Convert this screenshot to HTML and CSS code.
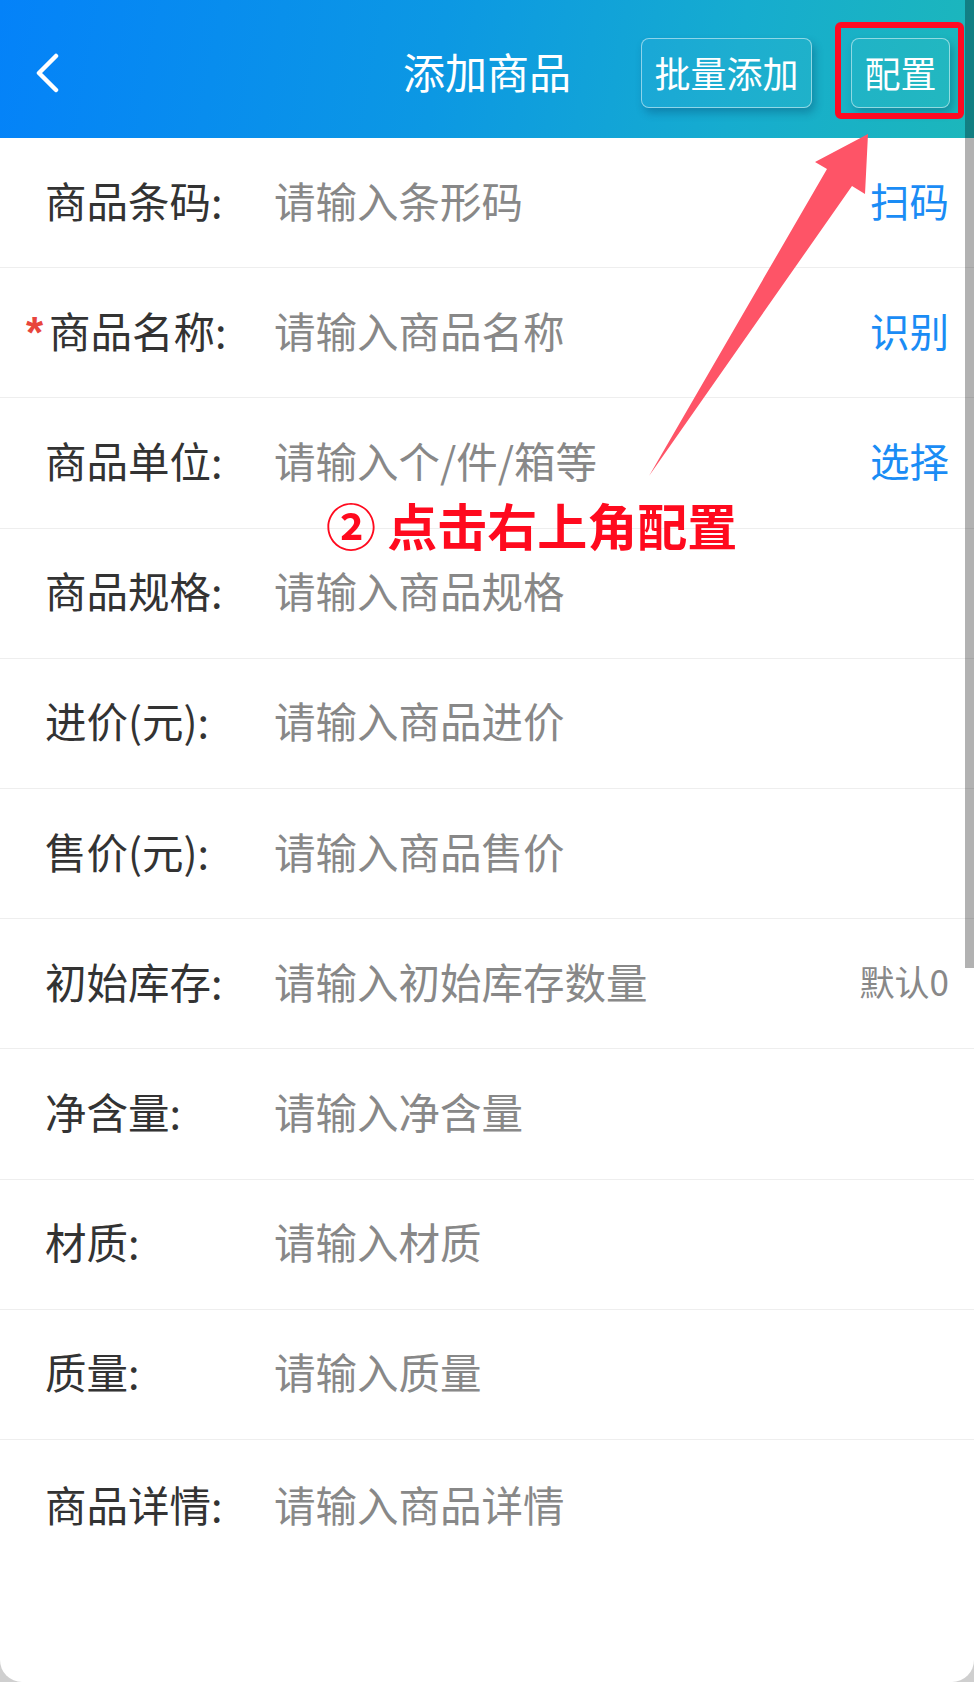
FILE: index.html
```html
<!DOCTYPE html>
<html lang="zh-CN">
<head>
<meta charset="utf-8">
<title>添加商品</title>
<link rel="stylesheet" href="styles.css">
</head>
<body>
<div class="screen">
  <header class="topbar">
    <div class="topbar-left">
      <svg class="back" width="26" height="40" viewBox="0 0 26 40"><polyline points="21,3 4,20 21,37" fill="none" stroke="#fff" stroke-width="4.5" stroke-linecap="round" stroke-linejoin="round"/></svg>
    </div>
    <div class="title">添加商品</div>
    <div class="topbar-right">
      <button class="hbtn hbtn-wide">批量添加</button>
      <button class="hbtn hbtn-cfg">配置</button>
    </div>
  </header>

  <div class="form">
    <div class="row"><span class="label">商品条码:</span><span class="ph">请输入条形码</span><span class="act">扫码</span></div>
    <div class="row"><span class="label"><span class="req">*</span>商品名称:</span><span class="ph">请输入商品名称</span><span class="act">识别</span></div>
    <div class="row"><span class="label">商品单位:</span><span class="ph">请输入个/件/箱等</span><span class="act">选择</span></div>
    <div class="row"><span class="label">商品规格:</span><span class="ph">请输入商品规格</span></div>
    <div class="row"><span class="label">进价(元):</span><span class="ph">请输入商品进价</span></div>
    <div class="row"><span class="label">售价(元):</span><span class="ph">请输入商品售价</span></div>
    <div class="row"><span class="label">初始库存:</span><span class="ph">请输入初始库存数量</span><span class="hint">默认0</span></div>
    <div class="row"><span class="label">净含量:</span><span class="ph">请输入净含量</span></div>
    <div class="row"><span class="label">材质:</span><span class="ph">请输入材质</span></div>
    <div class="row"><span class="label">质量:</span><span class="ph">请输入质量</span></div>
    <div class="row row-last"><span class="label">商品详情:</span><span class="ph">请输入商品详情</span></div>
  </div>

  <div class="cfg-frame"></div>
  <svg class="arrow" width="974" height="1682" viewBox="0 0 974 1682"><polygon points="649,476 827,169 815,162 868,134 865,194 852,186" fill="#fe5467"/></svg>
  <div class="note">② 点击右上角配置</div>
  <div class="scrollbar"></div>
</div>
</body>
</html>
```

FILE: styles.css
```css
* { box-sizing: border-box; }
html, body { margin: 0; padding: 0; }
body {
  background: #cfcfcf;
  font-family: "Noto Sans CJK SC", "Noto Sans", sans-serif;
}
.screen {
  position: relative;
  width: 974px;
  height: 1682px;
  background: #fff;
  border-radius: 0 0 22px 22px;
  overflow: hidden;
}
.topbar {
  height: 138px;
  padding-top: 8px;
  display: grid;
  grid-template-columns: 1fr auto 1fr;
  align-items: center;
  background: linear-gradient(100deg, #0482f9 0%, #0c98e3 45%, #16accf 75%, #1cb7bb 100%);
  color: #fff;
}
.topbar-left { padding-left: 35px; display: flex; align-items: center; }
.back { display: block; }
.title {
  font-size: 42px;
  line-height: 1;
  padding-bottom: 4px;
}
.topbar-right {
  display: flex;
  justify-content: flex-end;
  align-items: center;
  gap: 39px;
  padding-right: 24px;
}
.hbtn {
  height: 70px;
  font-family: inherit;
  font-size: 36px;
  color: #fff;
  background: rgba(255,255,255,0.03);
  border: 1.5px solid rgba(255,255,255,0.5);
  border-radius: 8px;
  box-shadow: 3px 5px 9px rgba(0, 40, 80, 0.28);
  padding: 0 0 2px;
  line-height: 1;
}
.hbtn-wide { width: 171px; }
.hbtn-cfg { width: 99px; }

.form { display: flex; flex-direction: column; }
.row {
  height: 130.2px;
  display: flex;
  align-items: center;
  padding: 0 25px 6px 45px;
  border-bottom: 1px solid #eeeeee;
  font-size: 41.5px;
}
.row-last {
  border-bottom: none;
  align-items: flex-start;
  padding-top: 34px;
}
.label {
  width: 229px;
  flex: none;
  color: #333;
  white-space: nowrap;
}
.req {
  color: #e8453c;
  display: inline-block;
  margin-left: -19px;
  width: 23px;
  font-family: "Liberation Sans", sans-serif;
  font-weight: 700;
  font-size: 44px;
  line-height: 1;
  vertical-align: 0;
}
.ph { color: #888; flex: 1; white-space: nowrap; }
.act { color: #1a8cf5; font-size: 39.5px; }
.hint { color: #888; font-size: 35px; }

.cfg-frame {
  position: absolute;
  left: 835px;
  top: 22px;
  width: 129px;
  height: 97px;
  border: 6px solid #ff0a22;
  border-radius: 6px;
}
.arrow { position: absolute; left: 0; top: 0; pointer-events: none; }
.note {
  position: absolute;
  left: 326px;
  top: 496px;
  font-size: 50px;
  line-height: 56px;
  font-weight: 700;
  color: #ff0a1e;
  white-space: nowrap;
}
.scrollbar {
  position: absolute;
  right: 0;
  top: 0;
  width: 9px;
  height: 968px;
  background: rgba(0,0,0,0.3);
}
```
